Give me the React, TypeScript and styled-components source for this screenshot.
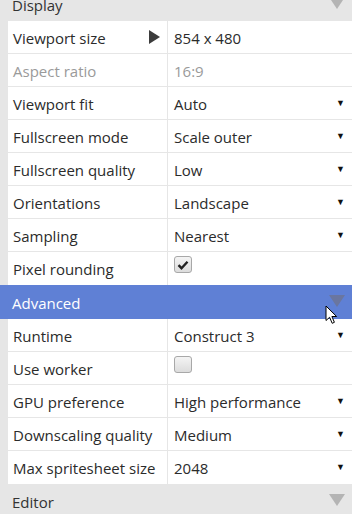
import React from 'react';
import styled, { createGlobalStyle } from 'styled-components';

const GlobalStyle = createGlobalStyle`
  html, body {
    margin: 0;
    padding: 0;
    background: #e6e6e6;
    overflow: hidden;
  }
  body {
    font-family: "Open Sans", "Noto Sans", sans-serif;
  }
`;

type Row =
  | { kind: 'text'; label: string; value: string; disabled?: boolean; expand?: boolean }
  | { kind: 'select'; label: string; value: string }
  | { kind: 'check'; label: string; checked: boolean };

const display: Row[] = [
  { kind: 'text', label: 'Viewport size', value: '854 x 480', expand: true },
  { kind: 'text', label: 'Aspect ratio', value: '16:9', disabled: true },
  { kind: 'select', label: 'Viewport fit', value: 'Auto' },
  { kind: 'select', label: 'Fullscreen mode', value: 'Scale outer' },
  { kind: 'select', label: 'Fullscreen quality', value: 'Low' },
  { kind: 'select', label: 'Orientations', value: 'Landscape' },
  { kind: 'select', label: 'Sampling', value: 'Nearest' },
  { kind: 'check', label: 'Pixel rounding', checked: true },
];

const advanced: Row[] = [
  { kind: 'select', label: 'Runtime', value: 'Construct 3' },
  { kind: 'check', label: 'Use worker', checked: false },
  { kind: 'select', label: 'GPU preference', value: 'High performance' },
  { kind: 'select', label: 'Downscaling quality', value: 'Medium' },
  { kind: 'select', label: 'Max spritesheet size', value: '2048' },
];

const App: React.FC = () => {
  return (
    <>
      <GlobalStyle />
      <Panel>
        <SectionHeader>
          <span>Display</span>
          <Chevron />
        </SectionHeader>
        <Body>
          {display.map((r) => (
            <PropRow key={r.label} row={r} />
          ))}
        </Body>
        <SectionHeader $active>
          <span>Advanced</span>
          <Chevron $active />
          <Cursor />
        </SectionHeader>
        <Body>
          {advanced.map((r) => (
            <PropRow key={r.label} row={r} />
          ))}
        </Body>
        <SectionHeader>
          <span>Editor</span>
          <Chevron />
        </SectionHeader>
      </Panel>
    </>
  );
};

const PropRow: React.FC<{ row: Row }> = ({ row }) => {
  const disabled = row.kind === 'text' && row.disabled;
  return (
    <RowWrap>
      <Label $disabled={disabled}>
        <span>{row.label}</span>
        {row.kind === 'text' && row.expand && <Expand />}
      </Label>
      <Value $disabled={disabled}>
        {row.kind === 'check' ? (
          <CheckBox>
            {row.checked && (
              <svg width="12" height="10" viewBox="0 0 12 10">
                <path d="M1.5 5.2 L4.5 8.2 L10.5 1.8" stroke="#222" strokeWidth="2.4" fill="none" />
              </svg>
            )}
          </CheckBox>
        ) : (
          <span>{row.value}</span>
        )}
        {row.kind === 'select' && <DropArrow>▼</DropArrow>}
      </Value>
    </RowWrap>
  );
};

const Cursor: React.FC = () => (
  <CursorSvg width="13" height="20" viewBox="0 0 13 20">
    <path
      d="M1 1 L1 15.5 L4.6 12.3 L7.2 18.3 L9.4 17.3 L6.9 11.5 L11.6 11.5 Z"
      fill="#fff"
      stroke="#000"
      strokeWidth="1"
      strokeLinejoin="miter"
    />
  </CursorSvg>
);

const Panel = styled.div`
  width: 352px;
  margin-top: -13px;
  display: flex;
  flex-direction: column;
  background: #e6e6e6;
`;

const SectionHeader = styled.div<{ $active?: boolean }>`
  position: relative;
  height: 34px;
  flex: none;
  display: flex;
  align-items: center;
  justify-content: space-between;
  padding: 1px 7px 0 12px;
  box-sizing: border-box;
  font-size: 15px;
  color: ${(p) => (p.$active ? '#ffffff' : '#333333')};
  background: ${(p) => (p.$active ? '#5f80d5' : '#e6e6e6')};
`;

const Chevron = styled.div<{ $active?: boolean }>`
  width: 0;
  height: 0;
  border-left: 8px solid transparent;
  border-right: 8px solid transparent;
  border-top: 12px solid ${(p) => (p.$active ? '#6a76a0' : '#b4b4b4')};
  margin-top: -4px;
`;

const CursorSvg = styled.svg`
  position: absolute;
  left: 325px;
  top: 20px;
`;

const Body = styled.div`
  flex: none;
  margin-left: 8px;
  background: #ffffff;
  display: flex;
  flex-direction: column;
`;

const RowWrap = styled.div`
  height: 33px;
  box-sizing: border-box;
  display: grid;
  grid-template-columns: 160px 1fr;
  border-bottom: 1px solid #e6e6e6;
  &:last-child {
    border-bottom: none;
  }
  font-size: 15px;
`;

const Label = styled.div<{ $disabled?: boolean }>`
  display: flex;
  align-items: center;
  justify-content: space-between;
  padding: 1px 7px 0 5px;
  border-right: 1px solid #e6e6e6;
  color: ${(p) => (p.$disabled ? '#9a9a9a' : '#2b2b2b')};
  white-space: nowrap;
  overflow: hidden;
`;

const Expand = styled.div`
  width: 0;
  height: 0;
  margin-top: -1px;
  border-top: 7px solid transparent;
  border-bottom: 7px solid transparent;
  border-left: 11px solid #3c3c3c;
`;

const Value = styled.div<{ $disabled?: boolean }>`
  display: flex;
  align-items: center;
  justify-content: space-between;
  padding: 1px 7px 0 6px;
  color: ${(p) => (p.$disabled ? '#9a9a9a' : '#2b2b2b')};
  white-space: nowrap;
`;

const DropArrow = styled.span`
  font-size: 9px;
  color: #111;
  margin-top: -3px;
`;

const CheckBox = styled.div`
  width: 16px;
  height: 15px;
  align-self: flex-start;
  margin-top: 3px;
  border: 1px solid #a8a8a8;
  border-radius: 3px;
  background: linear-gradient(#f4f4f4, #dcdcdc);
  display: flex;
  align-items: center;
  justify-content: center;
`;

export default App;
